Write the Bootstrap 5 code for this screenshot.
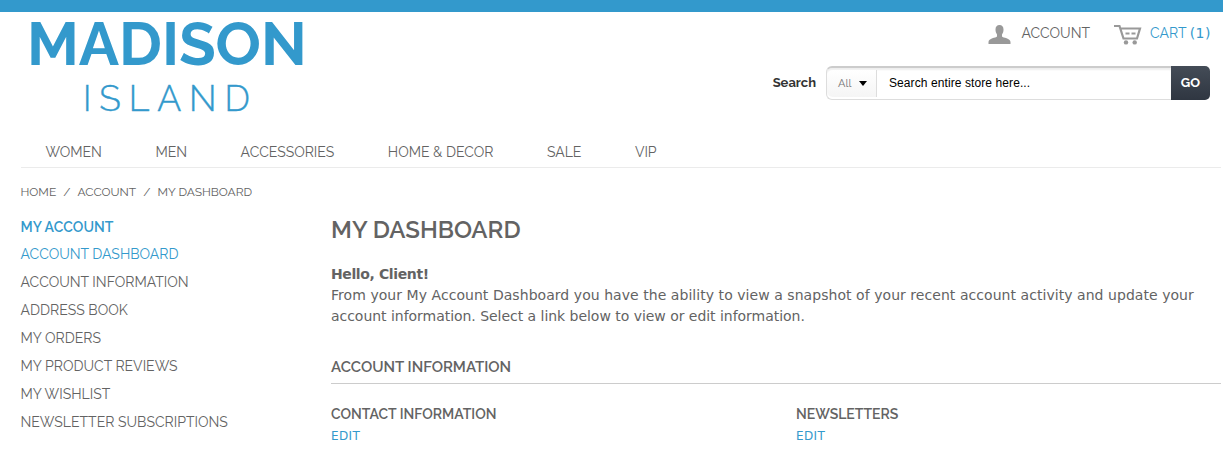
<!DOCTYPE html>
<html lang="en">
<head>
<meta charset="utf-8">
<meta name="viewport" content="width=device-width, initial-scale=1">
<title>My Dashboard</title>
<link href="https://cdn.jsdelivr.net/npm/bootstrap@5.3.0/dist/css/bootstrap.min.css" rel="stylesheet">
<style>
  :root { --brand: #3399cc; --ink: #636363; }
  body { font-family: Raleway, Lato, sans-serif; font-size: 14px; line-height: 20px; color: var(--ink); background: #fff; overflow: hidden; }
  a { color: inherit; text-decoration: none; }
  .brand-text { color: var(--brand) !important; }
  .sans { font-family: "DejaVu Sans", Verdana, sans-serif; }
  .topbar { height: 12px; background: var(--brand); }
  .masthead { height: 124px; padding-right: 13px; }
  .logo { width: 290px; margin-left: 27px; padding-top: 7px; }
  .logo-main { font-size: 60px; font-weight: 700; line-height: 50px; white-space: nowrap; letter-spacing: -.1px; }
  .logo-sub { font-size: 35.5px; font-weight: 300; line-height: 40px; letter-spacing: 7.9px; margin: 10px 0 0 56px; -webkit-text-stroke: .4px var(--brand); }
  .account-links { height: 54px; padding-top: 11px; margin-right: -1px; }
  .count { font-size: 14px; letter-spacing: .5px; }
  .search-label { font-size: 13px; font-weight: 700; color: #333; margin-right: 10px; }
  .search-box { width: 384px; height: 34px; }
  .search-field { border: 1px solid #ddd; border-top: 2px solid #ccc; border-right: 0; border-radius: 6px 0 0 6px; box-shadow: inset 0 2px 2px #eee; padding-top: 2px; padding-bottom: 2px; }
  .scope { width: 50px; font-size: 11px; color: #777; padding-left: 11px; border-right: 1px solid #ddd; background: linear-gradient(#fff, #f5f5f5); border-radius: 6px 0 0 6px; }
  .query { font: 12px "Liberation Sans", Arial, sans-serif; letter-spacing: .09px; color: #000; padding: 0 0 2px 12px; }
  .go { width: 39px; font-size: 13px; font-weight: 700; color: #fff; background: linear-gradient(#444c57, #2f3641); border-radius: 0 5px 5px 0; }
  .mainnav { margin-left: 21px; margin-right: 2px; height: 32px; padding: 6px 0 0 24.5px; gap: 53.5px; border-bottom: 1px solid #ebebeb; }
  .crumbs { font-size: 12px; margin: 14px 0 0 20.5px; gap: 7px; }
  .page { padding: 15px 2px 0 20.5px; }
  .side { width: 310.5px; flex: none; }
  .side strong { font-weight: 600; line-height: 20px; margin-bottom: 3px; letter-spacing: .07px; }
  .side a { line-height: 28px; letter-spacing: .02px; }
  h1 { font-size: 24px; font-weight: 600; line-height: 28px; margin: -1px 0 20px; }
  .intro { line-height: 21px; letter-spacing: .05px; }
  .intro strong { letter-spacing: -.38px; }
  .intro span { letter-spacing: -.035px; }
  h2 { font-size: 15px; font-weight: 600; line-height: 20px; margin: 30px 0 20px; padding-bottom: 6px; border-bottom: 1px solid #ccc; }
  h3 { font-size: 14px; font-weight: 600; line-height: 20px; margin: 0; }
  .edit { font-size: 12px; line-height: 24px; letter-spacing: .4px; }
  .box-a { width: 465px; }
</style>
</head>
<body>
<div class="topbar"></div>
<header class="masthead d-flex justify-content-between">
  <a href="#" class="logo brand-text">
    <div class="logo-main">MADISON</div>
    <div class="logo-sub">ISLAND</div>
  </a>
  <div>
    <div class="account-links d-flex justify-content-end">
      <a href="#" class="d-flex me-4">
        <svg class="me-2" width="25" height="22" viewBox="0 0 25 22" fill="#999"><path d="M7.500 6.500C7.500 3.500 9 2 11.500 2s4 1.500 4 4.500c0 2-.5 3.500-1.500 5v2c1 1.500 8.500 1.500 8.500 5.500v2H.5v-2c0-4 7.500-4 8.500-5.500v-2C8 10 7.500 8.500 7.500 6.500z"/></svg>
        <span>ACCOUNT</span>
      </a>
      <a href="#" class="d-flex brand-text">
        <svg class="me-2" width="28" height="22" viewBox="0 0 28 22" fill="none" stroke="#999" stroke-width="2.200"><path d="M0 3h5.500L9.500 15.500H23L26 5.500H7"/><path d="M11.500 10.500h4M17.500 10.500h4"/><g fill="#999" stroke="none"><circle cx="12" cy="19.400" r="2.200"/><circle cx="20.700" cy="19.400" r="2.200"/></g></svg>
        <span>CART <span class="sans count">(1)</span></span>
      </a>
    </div>
    <form class="d-flex align-items-center justify-content-end">
      <label class="search-label">Search</label>
      <div class="search-box d-flex">
        <div class="search-field d-flex flex-fill">
          <div class="scope d-flex align-items-center">All
            <svg class="ms-2" width="8" height="5" viewBox="0 0 8 5"><path d="M0 0h8L4 5z" fill="#000"/></svg>
          </div>
          <div class="query d-flex align-items-center">Search entire store here...</div>
        </div>
        <div class="go d-flex align-items-center justify-content-center">GO</div>
      </div>
    </form>
  </div>
</header>
<nav class="mainnav d-flex">
  <a href="#">WOMEN</a><a href="#">MEN</a><a href="#">ACCESSORIES</a><a href="#">HOME &amp; DECOR</a><a href="#">SALE</a><a href="#">VIP</a>
</nav>
<div class="crumbs d-flex"><a href="#">HOME</a><span>/</span><a href="#">ACCOUNT</a><span>/</span><span>MY DASHBOARD</span></div>
<div class="page d-flex">
  <aside class="side d-flex flex-column">
    <strong class="brand-text">MY ACCOUNT</strong>
    <a href="#" class="brand-text">ACCOUNT DASHBOARD</a>
    <a href="#">ACCOUNT INFORMATION</a>
    <a href="#">ADDRESS BOOK</a>
    <a href="#">MY ORDERS</a>
    <a href="#">MY PRODUCT REVIEWS</a>
    <a href="#">MY WISHLIST</a>
    <a href="#">NEWSLETTER SUBSCRIPTIONS</a>
  </aside>
  <main class="flex-fill">
    <h1>MY DASHBOARD</h1>
    <div class="intro sans"><strong>Hello, Client!</strong><br>From your My Account Dashboard you have the ability to view a snapshot of your recent account activity and update your <span>account information. Select a link below to view or edit information.</span></div>
    <h2>ACCOUNT INFORMATION</h2>
    <div class="d-flex">
      <div class="box-a"><h3>CONTACT INFORMATION</h3><a href="#" class="edit sans brand-text">EDIT</a></div>
      <div><h3>NEWSLETTERS</h3><a href="#" class="edit sans brand-text">EDIT</a></div>
    </div>
  </main>
</div>
<script src="https://cdn.jsdelivr.net/npm/bootstrap@5.3.0/dist/js/bootstrap.bundle.min.js"></script>
</body>
</html>
